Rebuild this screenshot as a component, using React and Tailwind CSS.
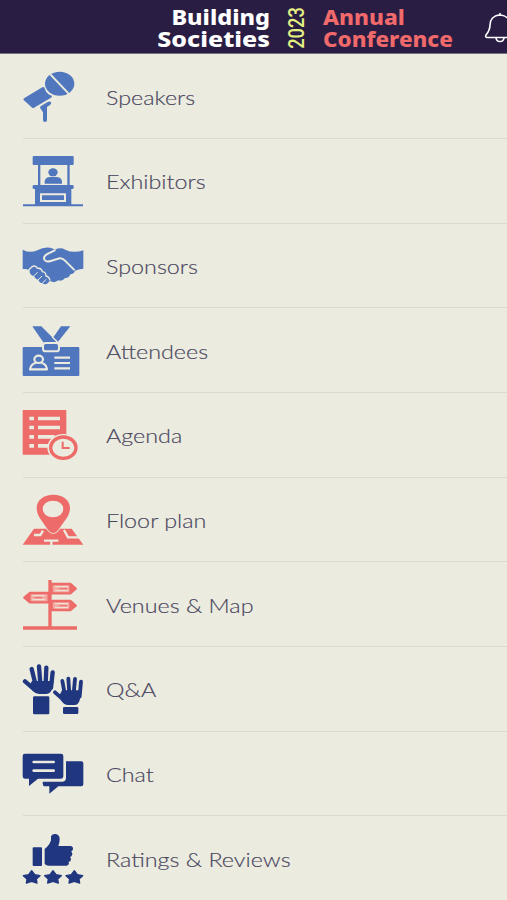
import React from "react";

const PAPER = "#ebebdf";

// Every icon is drawn on a 192x180 grid, shown at 64x60
const Icon = ({ top, className, children }) => (
  <svg
    viewBox={`36 ${top} 192 180`}
    className={`w-16 h-[60px] -ml-px mb-px shrink-0 ${className}`}
    fill="currentColor"
    aria-hidden="true"
  >
    {children}
  </svg>
);

const MicIcon = () => (
  <Icon top={18} className="text-[#5076bd]">
    <path d="M42 115 97 82Q103 79 105 88Q110 103 125 107Q128 109 123 113L72 143Q67 145 64 141L41 120Q39 117 42 115Z" />
    <ellipse cx="149" cy="71" rx="44" ry="36" />
    <path d="M121 43 178 103" stroke={PAPER} strokeWidth="6" />
    <path d="M92 139 113 126Q120 123 123 127Q125 132 120 135L111 141V181Q111 186 105 186Q99 186 99 181V157L91 145Q89 141 92 139Z" />
  </Icon>
);

const BoothIcon = () => (
  <Icon top={17} className="text-[#5076bd]">
    <rect x="68" y="35" width="123" height="27" rx="3" />
    <path d="M84 60h7v64h-7zM172 60h7v64h-7z" />
    <ellipse cx="129" cy="84" rx="14" ry="12" />
    <path d="M104 118V111Q106 98 121 98H138Q154 98 156 111V118Z" />
    <rect x="68" y="122" width="123" height="12" rx="4" />
    <path d="M75 132h109v50H75z" />
    <path d="M93 150h72v20H93z" fill="none" stroke={PAPER} strokeWidth="6" />
    <path d="M39 180h180v6H39z" />
  </Icon>
);

const HandshakeIcon = () => (
  <Icon top={16} className="text-[#5076bd]">
    <path d="M38 60Q60 72 82 62Q108 48 129 57L135 60Q151 52 166 60Q190 72 220 62V117Q204 118 195 123Q192 133 181 134Q176 147 165 145Q157 156 145 152Q133 161 123 155Q116 153 114 160Q105 168 97 160Q88 160 85 150Q75 149 73 140Q57 136 59 122Q50 117 38 118Z" />
    <path
      d="M134 62 110 74Q98 82 104 91Q109 98 122 94L149 86Q157 85 165 93L192 120"
      fill="none"
      stroke={PAPER}
      strokeWidth="6"
      strokeLinecap="round"
    />
    <path
      d="M56 121 66 111Q76 105 83 116Q94 114 97 126Q108 127 108 139Q118 141 120 153"
      fill="none"
      stroke={PAPER}
      strokeWidth="4"
    />
    <path d="M71 139 83 128M84 151 96 139M97 161 108 149" stroke={PAPER} strokeWidth="3" />
  </Icon>
);

const BadgeIcon = () => (
  <Icon top={15} className="text-[#5076bd]">
    <path d="M67 34H94L143 83 136 89H105Z" />
    <path d="M153 34H181L143 82 129 68Z" />
    <path d="M127 66 146 85" stroke={PAPER} strokeWidth="4" />
    <rect x="38" y="96" width="170" height="87" rx="3" />
    <rect x="99" y="84" width="48" height="25" rx="8" stroke={PAPER} strokeWidth="6" />
    <g fill="none" stroke={PAPER} strokeWidth="6.500">
      <ellipse cx="86" cy="133" rx="13" ry="11" />
      <path d="M78 144Q63 146 60 163H111Q109 146 94 144" strokeLinejoin="round" />
      <path d="M133 128h47M133 144h47M133 160h47" />
    </g>
  </Icon>
);

const AgendaIcon = () => (
  <Icon top={14} className="text-[#ed6c69]">
    <rect x="38" y="32" width="131" height="134" rx="2" />
    <path
      d="M58 52h14v11H58zM84 52h66v11H84zM58 79h14v11H58zM84 79h66v11H84zM58 107h14v11H58zM84 107h50v11H84zM58 134h14v11H58zM84 134h50v11H84z"
      fill={PAPER}
    />
    <ellipse cx="160" cy="145" rx="48" ry="41" fill={PAPER} />
    <ellipse cx="160" cy="145" rx="38" ry="32" fill="none" stroke="currentColor" strokeWidth="10" />
    <path d="M158 127v19h21" fill="none" stroke="currentColor" strokeWidth="6" />
  </Icon>
);

const FloorIcon = () => (
  <Icon top={13} className="text-[#ed6c69]">
    <path d="M72 132H185L220 180H38Z" />
    <g fill="none" stroke={PAPER} strokeWidth="7">
      <path d="M72 151H91L99 138" />
      <path d="M162 136 174 158H207" />
      <path d="M102 168H145M124 168V181" />
    </g>
    <path
      d="M130 30C102 30 80 46 80 70C80 91 94 106 108 127Q119 145 130 145Q140 145 151 127C166 106 180 91 180 70C180 46 158 30 130 30Z"
      stroke={PAPER}
      strokeWidth="5"
      paintOrder="stroke"
    />
    <ellipse cx="129" cy="73" rx="31" ry="25" fill={PAPER} />
  </Icon>
);

const SignpostIcon = () => (
  <Icon top={12} className="text-[#ed6c69]">
    <path d="M115 30h10v142h-10zM39 169h162v10H39z" />
    <g fill="#f4a9a2" stroke="currentColor" strokeWidth="7" strokeLinejoin="round">
      <path d="M125 42H181L197 56 181 70H125Z" />
      <path d="M116 69H60L43 83 60 97H116Z" />
      <path d="M125 93H181L197 107 181 120H125Z" />
    </g>
    <path d="M178 40 200 56 178 72ZM62 67 40 83 62 99ZM178 91 200 107 178 122Z" />
    <path
      d="M135 50h39M135 62h39M67 77h38M67 89h38M135 101h39M135 113h39"
      stroke={PAPER}
      strokeWidth="3"
    />
    <path d="M148 56h23M73 83h22M148 107h23" stroke="currentColor" strokeWidth="3" />
  </Icon>
);

const HandsIcon = () => (
  <Icon top={11} className="text-[#20367f]">
    <path d="M66 80H131L125 107Q120 119 107 119H87Q76 119 69 110L57 96Z" />
    <g fill="none" stroke="currentColor" strokeWidth="13" strokeLinecap="round">
      <path d="M45 81 73 105M65 44 76 88M87 36 91 88M109 40 107 88M128 54 123 100" />
    </g>
    <rect x="69" y="126" width="49" height="54" rx="4" />
    <path d="M156 108H216L209 138Q205 152 194 152H174Q162 152 155 141L146 128Z" />
    <g fill="none" stroke="currentColor" strokeWidth="11.500" strokeLinecap="round">
      <path d="M135 114 159 135M157 80 164 118M175 73 178 118M195 74 191 118M213 82 209 127" />
    </g>
    <rect x="159" y="158" width="46" height="21" rx="4" />
  </Icon>
);

const ChatIcon = () => (
  <Icon top={10} className="text-[#20367f]">
    <path d="M168 65H214Q220 65 220 71V134Q220 140 214 140H145L118 162V140H104Q98 140 98 126H156Q168 126 168 115Z" />
    <path
      d="M45 42H153Q160 42 160 49V110Q160 117 153 117H84L57 139V117H45Q38 117 38 110V49Q38 42 45 42Z"
      stroke={PAPER}
      strokeWidth="4"
      paintOrder="stroke"
    />
    <path d="M71 67h60M71 93h60" stroke={PAPER} strokeWidth="8" strokeLinecap="round" />
  </Icon>
);

const RatingsIcon = () => (
  <Icon top={24} className="text-[#20367f]">
    <rect x="68" y="82" width="28" height="56" rx="3" />
    <path d="M104 87Q118 77 123 61V49Q127 40 138 42Q149 45 149 57Q149 68 145 78H181Q190 79 189 88Q187 94 183 95Q189 98 186 106Q184 111 180 111Q185 115 182 122Q180 125 176 125Q179 135 169 137H116Q109 137 104 132Z" />
    {[65, 129, 193].map((x) => (
      <path
        key={x}
        transform={`translate(${x} 171)`}
        d="M0-19 9-7 25-4 14 6 16 18 0 13-16 18-14 6-25-4-9-7Z"
        stroke="currentColor"
        strokeWidth="4"
        strokeLinejoin="round"
      />
    ))}
  </Icon>
);

const menu = [
  { label: "Speakers", icon: MicIcon },
  { label: "Exhibitors", icon: BoothIcon },
  { label: "Sponsors", icon: HandshakeIcon },
  { label: "Attendees", icon: BadgeIcon },
  { label: "Agenda", icon: AgendaIcon },
  { label: "Floor plan", icon: FloorIcon },
  { label: "Venues & Map", icon: SignpostIcon },
  { label: "Q&A", icon: HandsIcon },
  { label: "Chat", icon: ChatIcon },
  { label: "Ratings & Reviews", icon: RatingsIcon },
];

const Header = () => (
  <header className="h-[54px] w-full flex items-start bg-[#291d43] border-b border-[#77717f] font-['Noto_Sans',sans-serif] font-extrabold text-[21px] leading-[22px] overflow-hidden">
    <div className="w-[270px] shrink-0 pt-[6px] text-right text-white whitespace-nowrap">
      <p className="origin-right scale-x-[1.12]">Building</p>
      <p className="origin-right scale-x-[1.19]">Societies</p>
    </div>
    <div className="w-[53px] h-[55px] pl-0.5 shrink-0 flex items-center justify-center">
      <span className="-rotate-90 font-['Roboto',sans-serif] font-medium text-[22px] text-[#e3ef83] scale-x-[0.83]">
        2023
      </span>
    </div>
    <div className="w-[161px] shrink-0 pt-[6px] text-[#f0696b] whitespace-nowrap">
      <p className="origin-left scale-x-[1.08]">Annual</p>
      <p className="origin-left scale-x-[1.07]">Conference</p>
    </div>
    <svg
      viewBox="0 0 32 32"
      className="w-8 h-8 shrink-0 mt-3"
      fill="none"
      stroke="white"
      strokeWidth="1.6"
      strokeLinecap="round"
      strokeLinejoin="round"
      aria-label="Notifications"
    >
      <path d="M16 3C9 3.500 6 8 6 13C6 18 4.500 20 2 23Q1 25 3 25.500H29Q31 25 30 23C27.500 20 26 18 26 13C26 8 23 3.500 16 3Z" />
      <path d="M16 1.500V3M12 26Q12.500 29.500 16 29.500Q19.500 29.500 20 26" />
    </svg>
  </header>
);

export default function App() {
  return (
    <div className="w-full h-[900px] overflow-hidden bg-[#ebebdf]">
      <Header />
      <ul className="pt-[0.5px]">
        {menu.map(({ label, icon: MenuIcon }) => (
          <li key={label} className="h-[84.67px] pl-[23px]">
            <div className="h-full flex items-center border-b border-[#dadacf]">
              <MenuIcon />
              <span className="ml-[19.5px] pt-px origin-left scale-x-[1.167] whitespace-nowrap font-['Lato',sans-serif] font-light text-[20px] leading-6 text-[#4a4660] [-webkit-text-stroke:0.15px_#4a4660]">
                {label}
              </span>
            </div>
          </li>
        ))}
      </ul>
    </div>
  );
}
